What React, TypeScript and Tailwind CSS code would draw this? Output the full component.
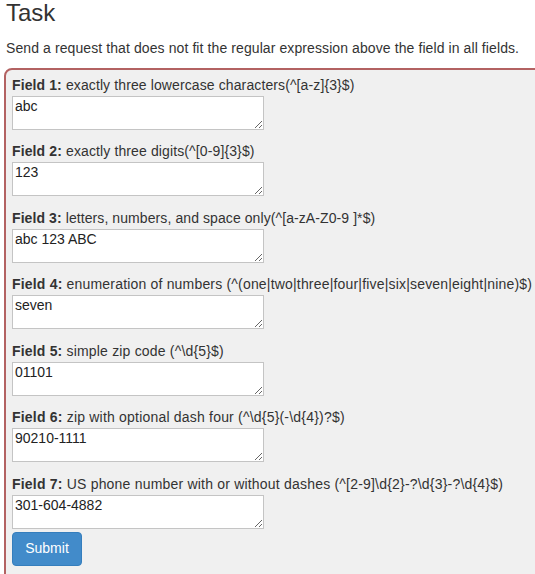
import React from "react";

const fields: { label: string; desc: string; value: string; ls: string }[] = [
  { label: "Field 1:", desc: "exactly three lowercase characters(^[a-z]{3}$)", value: "abc", ls: "0.11px" },
  { label: "Field 2:", desc: "exactly three digits(^[0-9]{3}$)", value: "123", ls: "0.12px" },
  { label: "Field 3:", desc: "letters, numbers, and space only(^[a-zA-Z0-9 ]*$)", value: "abc 123 ABC", ls: "0.086px" },
  { label: "Field 4:", desc: "enumeration of numbers (^(one|two|three|four|five|six|seven|eight|nine)$)", value: "seven", ls: "0.185px" },
  { label: "Field 5:", desc: "simple zip code (^\\d{5}$)", value: "01101", ls: "0.18px" },
  { label: "Field 6:", desc: "zip with optional dash four (^\\d{5}(-\\d{4})?$)", value: "90210-1111", ls: "0.2px" },
  { label: "Field 7:", desc: "US phone number with or without dashes (^[2-9]\\d{2}-?\\d{3}-?\\d{4}$)", value: "301-604-4882", ls: "0.2px" },
];

export default function App() {
  return (
    <div
      className="w-[535px] h-[574px] overflow-hidden bg-white text-[#333] pl-[4px]"
      style={{ fontFamily: '"Liberation Sans", Arial, sans-serif' }}
    >
      <h3 className="ml-[2px] text-[24px] leading-[1.1] font-normal">Task</h3>
      <p className="ml-[2px] mt-[11.6px] mb-[10px] text-[14px] leading-[20px] tracking-[0.093px] whitespace-nowrap">
        Send a request that does not fit the regular expression above the field in all fields.
      </p>
      <form className="w-[600px] h-[600px] bg-[#f0f0f0] border-2 border-[#b36262] rounded-tl-[8px] pl-[6px] pt-[5px]">
        {fields.map((f, i) => (
          <div key={f.label} className={i === fields.length - 1 ? "" : "mb-[11.5px]"}>
            <label
              className="block text-[14px] leading-[20px] whitespace-nowrap"
              style={{ letterSpacing: f.ls }}
            >
              <span className="font-bold">{f.label}</span> {f.desc}
            </label>
            <textarea
              defaultValue={f.value}
              className="block mt-[1px] w-[252px] h-[34px] bg-white border border-[#c4c4c4] px-[2px] py-[1px] text-[14px] leading-[17px] text-[#222]"
              style={{ fontFamily: '"Liberation Sans", Arial, sans-serif' }}
            />
          </div>
        ))}
        <button
          type="button"
          className="block mt-[3px] w-[70px] h-[34px] rounded-[4px] bg-[#428bca] border border-[#357ebd] text-white text-[14px]"
        >
          Submit
        </button>
      </form>
    </div>
  );
}
